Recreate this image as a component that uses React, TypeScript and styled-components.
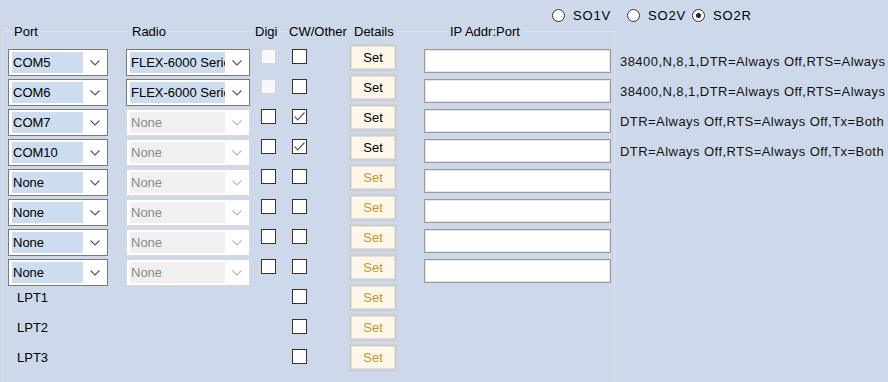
import styled, { createGlobalStyle } from 'styled-components'

const GlobalStyle = createGlobalStyle`
  html, body {
    margin: 0;
    padding: 0;
  }
  body {
    background: #cdd9ea;
    font-family: "Liberation Sans", Arial, sans-serif;
    font-size: 13px;
    color: #000;
  }
`

type PortRow = {
  port: string
  lpt?: boolean
  radio?: string
  radioEnabled?: boolean
  digi?: 'off' | 'disabled'
  cw?: boolean
  active?: boolean
  details?: string
}

const serialFlex = '38400,N,8,1,DTR=Always Off,RTS=Always Off,Tx=Both'
const lineOnly = 'DTR=Always Off,RTS=Always Off,Tx=Both'

const rows: PortRow[] = [
  { port: 'COM5', radio: 'FLEX-6000 Series', radioEnabled: true, digi: 'disabled', active: true, details: serialFlex },
  { port: 'COM6', radio: 'FLEX-6000 Series', radioEnabled: true, digi: 'disabled', active: true, details: serialFlex },
  { port: 'COM7', radio: 'None', digi: 'off', cw: true, active: true, details: lineOnly },
  { port: 'COM10', radio: 'None', digi: 'off', cw: true, active: true, details: lineOnly },
  { port: 'None', radio: 'None', digi: 'off' },
  { port: 'None', radio: 'None', digi: 'off' },
  { port: 'None', radio: 'None', digi: 'off' },
  { port: 'None', radio: 'None', digi: 'off' },
  { port: 'LPT1', lpt: true },
  { port: 'LPT2', lpt: true },
  { port: 'LPT3', lpt: true },
]

const Page = styled.div`
  width: 888px;
  height: 382px;
  overflow: hidden;
  background: #cdd9ea;
`

const ModeBar = styled.div`
  height: 31px;
  box-sizing: border-box;
  display: flex;
  align-items: center;
  padding-left: 552px;
`

const ModeOption = styled.label<{ $width?: number }>`
  display: flex;
  align-items: center;
  gap: 8px;
  width: ${p => (p.$width ? `${p.$width}px` : 'auto')};
  letter-spacing: 0.8px;
  flex: none;
`

const RadioDot = styled.span<{ $checked?: boolean }>`
  width: 13px;
  height: 13px;
  box-sizing: border-box;
  border: 1px solid #333;
  border-radius: 50%;
  background: #fff;
  display: grid;
  place-items: center;
  &::after {
    content: '';
    width: 5px;
    height: 5px;
    border-radius: 50%;
    background: ${p => (p.$checked ? '#222' : 'transparent')};
  }
`

const Frame = styled.div`
  margin-left: 2px;
  width: 613px;
  box-sizing: border-box;
  border: 1px solid #dde2e9;
  border-bottom: none;
  padding-bottom: 30px;
`

const Header = styled.div`
  display: grid;
  grid-template-columns: 118px 123px 34px 65px 96px auto;
  padding-left: 9px;
  margin-top: -8px;
  height: 16px;
  line-height: 16px;
`

const HeaderLabel = styled.span`
  justify-self: start;
  padding: 0 2px;
  background: #cdd9ea;
`

const Rows = styled.div`
  padding-top: 4px;
`

const Row = styled.div`
  display: grid;
  grid-template-columns: 118px 135px 31px 57px 75px 196px max-content;
  align-items: start;
  height: 30px;
  padding-left: 5px;
`

const Combo = styled.div<{ $width: number; $disabled?: boolean }>`
  width: ${p => p.$width}px;
  height: 27px;
  margin-top: 5px;
  box-sizing: border-box;
  border: 1px solid ${p => (p.$disabled ? '#d9d9d9' : '#7a7a7a')};
  background: #fff;
  display: flex;
  padding: 2px 0 2px 3px;
`

const ComboValue = styled.span<{ $disabled?: boolean }>`
  flex: 1;
  min-width: 0;
  overflow: hidden;
  white-space: nowrap;
  background: ${p => (p.$disabled ? '#f0f0f0' : '#cddcee')};
  color: ${p => (p.$disabled ? '#8a8a8a' : '#000')};
  line-height: 21px;
  padding-left: 1px;
`

const ComboArrow = styled.span`
  width: 24px;
  flex: none;
  display: grid;
  place-items: center;
`

const CheckBox = styled.span<{ $disabled?: boolean }>`
  width: 15px;
  height: 15px;
  margin-top: 5px;
  box-sizing: border-box;
  border: 1px solid ${p => (p.$disabled ? '#d6d6d6' : '#333')};
  background: ${p => (p.$disabled ? '#f8f8f8' : '#fff')};
  display: grid;
  place-items: center;
`

const SetButton = styled.button<{ $muted?: boolean }>`
  width: 48px;
  height: 27px;
  box-sizing: border-box;
  margin: 0;
  padding: 0;
  border: 2px solid #cecece;
  box-shadow: inset 0 0 0 1px #e0e0e0;
  background: #fff8ea;
  font: inherit;
  color: ${p => (p.$muted ? '#c8942a' : '#000')};
`

const IpField = styled.input`
  width: 187px;
  height: 24px;
  margin: 5px 0 0;
  box-sizing: border-box;
  border: 1px solid #9a9a9a;
  box-shadow: inset 0 0 0 1px #e6e6e6;
  background: #fff;
  padding: 0 3px;
  font: inherit;
  outline: none;
`

const Details = styled.span`
  margin-top: 5px;
  line-height: 25px;
  white-space: nowrap;
  letter-spacing: 0.45px;
  color: #111;
`

const LptLabel = styled.span`
  margin: 6px 0 0 9px;
  line-height: 16px;
`

const Chevron = ({ disabled }: { disabled?: boolean }) => (
  <svg width="10" height="6" viewBox="0 0 10 6">
    <path d="M0.5 0.5 L5 5 L9.5 0.5" fill="none" stroke={disabled ? '#b8b8b8' : '#555'} strokeWidth="1.1" />
  </svg>
)

const Tick = () => (
  <svg width="13" height="13" viewBox="0 0 13 13">
    <path d="M1.5 6.5 L4.8 9.8 L11.5 2.5" fill="none" stroke="#5a5a5a" strokeWidth="1.2" />
  </svg>
)

const Select = ({ value, width, disabled }: { value: string; width: number; disabled?: boolean }) => (
  <Combo $width={width} $disabled={disabled}>
    <ComboValue $disabled={disabled}>{value}</ComboValue>
    <ComboArrow>
      <Chevron disabled={disabled} />
    </ComboArrow>
  </Combo>
)

export default function App() {
  return (
    <Page>
      <GlobalStyle />
      <ModeBar>
        <ModeOption $width={75}>
          <RadioDot />
          SO1V
        </ModeOption>
        <ModeOption $width={65}>
          <RadioDot />
          SO2V
        </ModeOption>
        <ModeOption>
          <RadioDot $checked />
          SO2R
        </ModeOption>
      </ModeBar>
      <Frame>
        <Header>
          <HeaderLabel>Port</HeaderLabel>
          <HeaderLabel>Radio</HeaderLabel>
          <HeaderLabel>Digi</HeaderLabel>
          <HeaderLabel>CW/Other</HeaderLabel>
          <HeaderLabel>Details</HeaderLabel>
          <HeaderLabel>IP Addr:Port</HeaderLabel>
        </Header>
        <Rows>
          {rows.map((r, i) => (
            <Row key={i}>
              {r.lpt ? <LptLabel>{r.port}</LptLabel> : <Select value={r.port} width={100} />}
              {r.radio ? <Select value={r.radio} width={124} disabled={!r.radioEnabled} /> : <span />}
              {r.digi ? <CheckBox $disabled={r.digi === 'disabled'} /> : <span />}
              <CheckBox>{r.cw && <Tick />}</CheckBox>
              <SetButton $muted={!r.active}>Set</SetButton>
              {r.lpt ? <span /> : <IpField />}
              {r.details ? <Details>{r.details}</Details> : <span />}
            </Row>
          ))}
        </Rows>
      </Frame>
    </Page>
  )
}
